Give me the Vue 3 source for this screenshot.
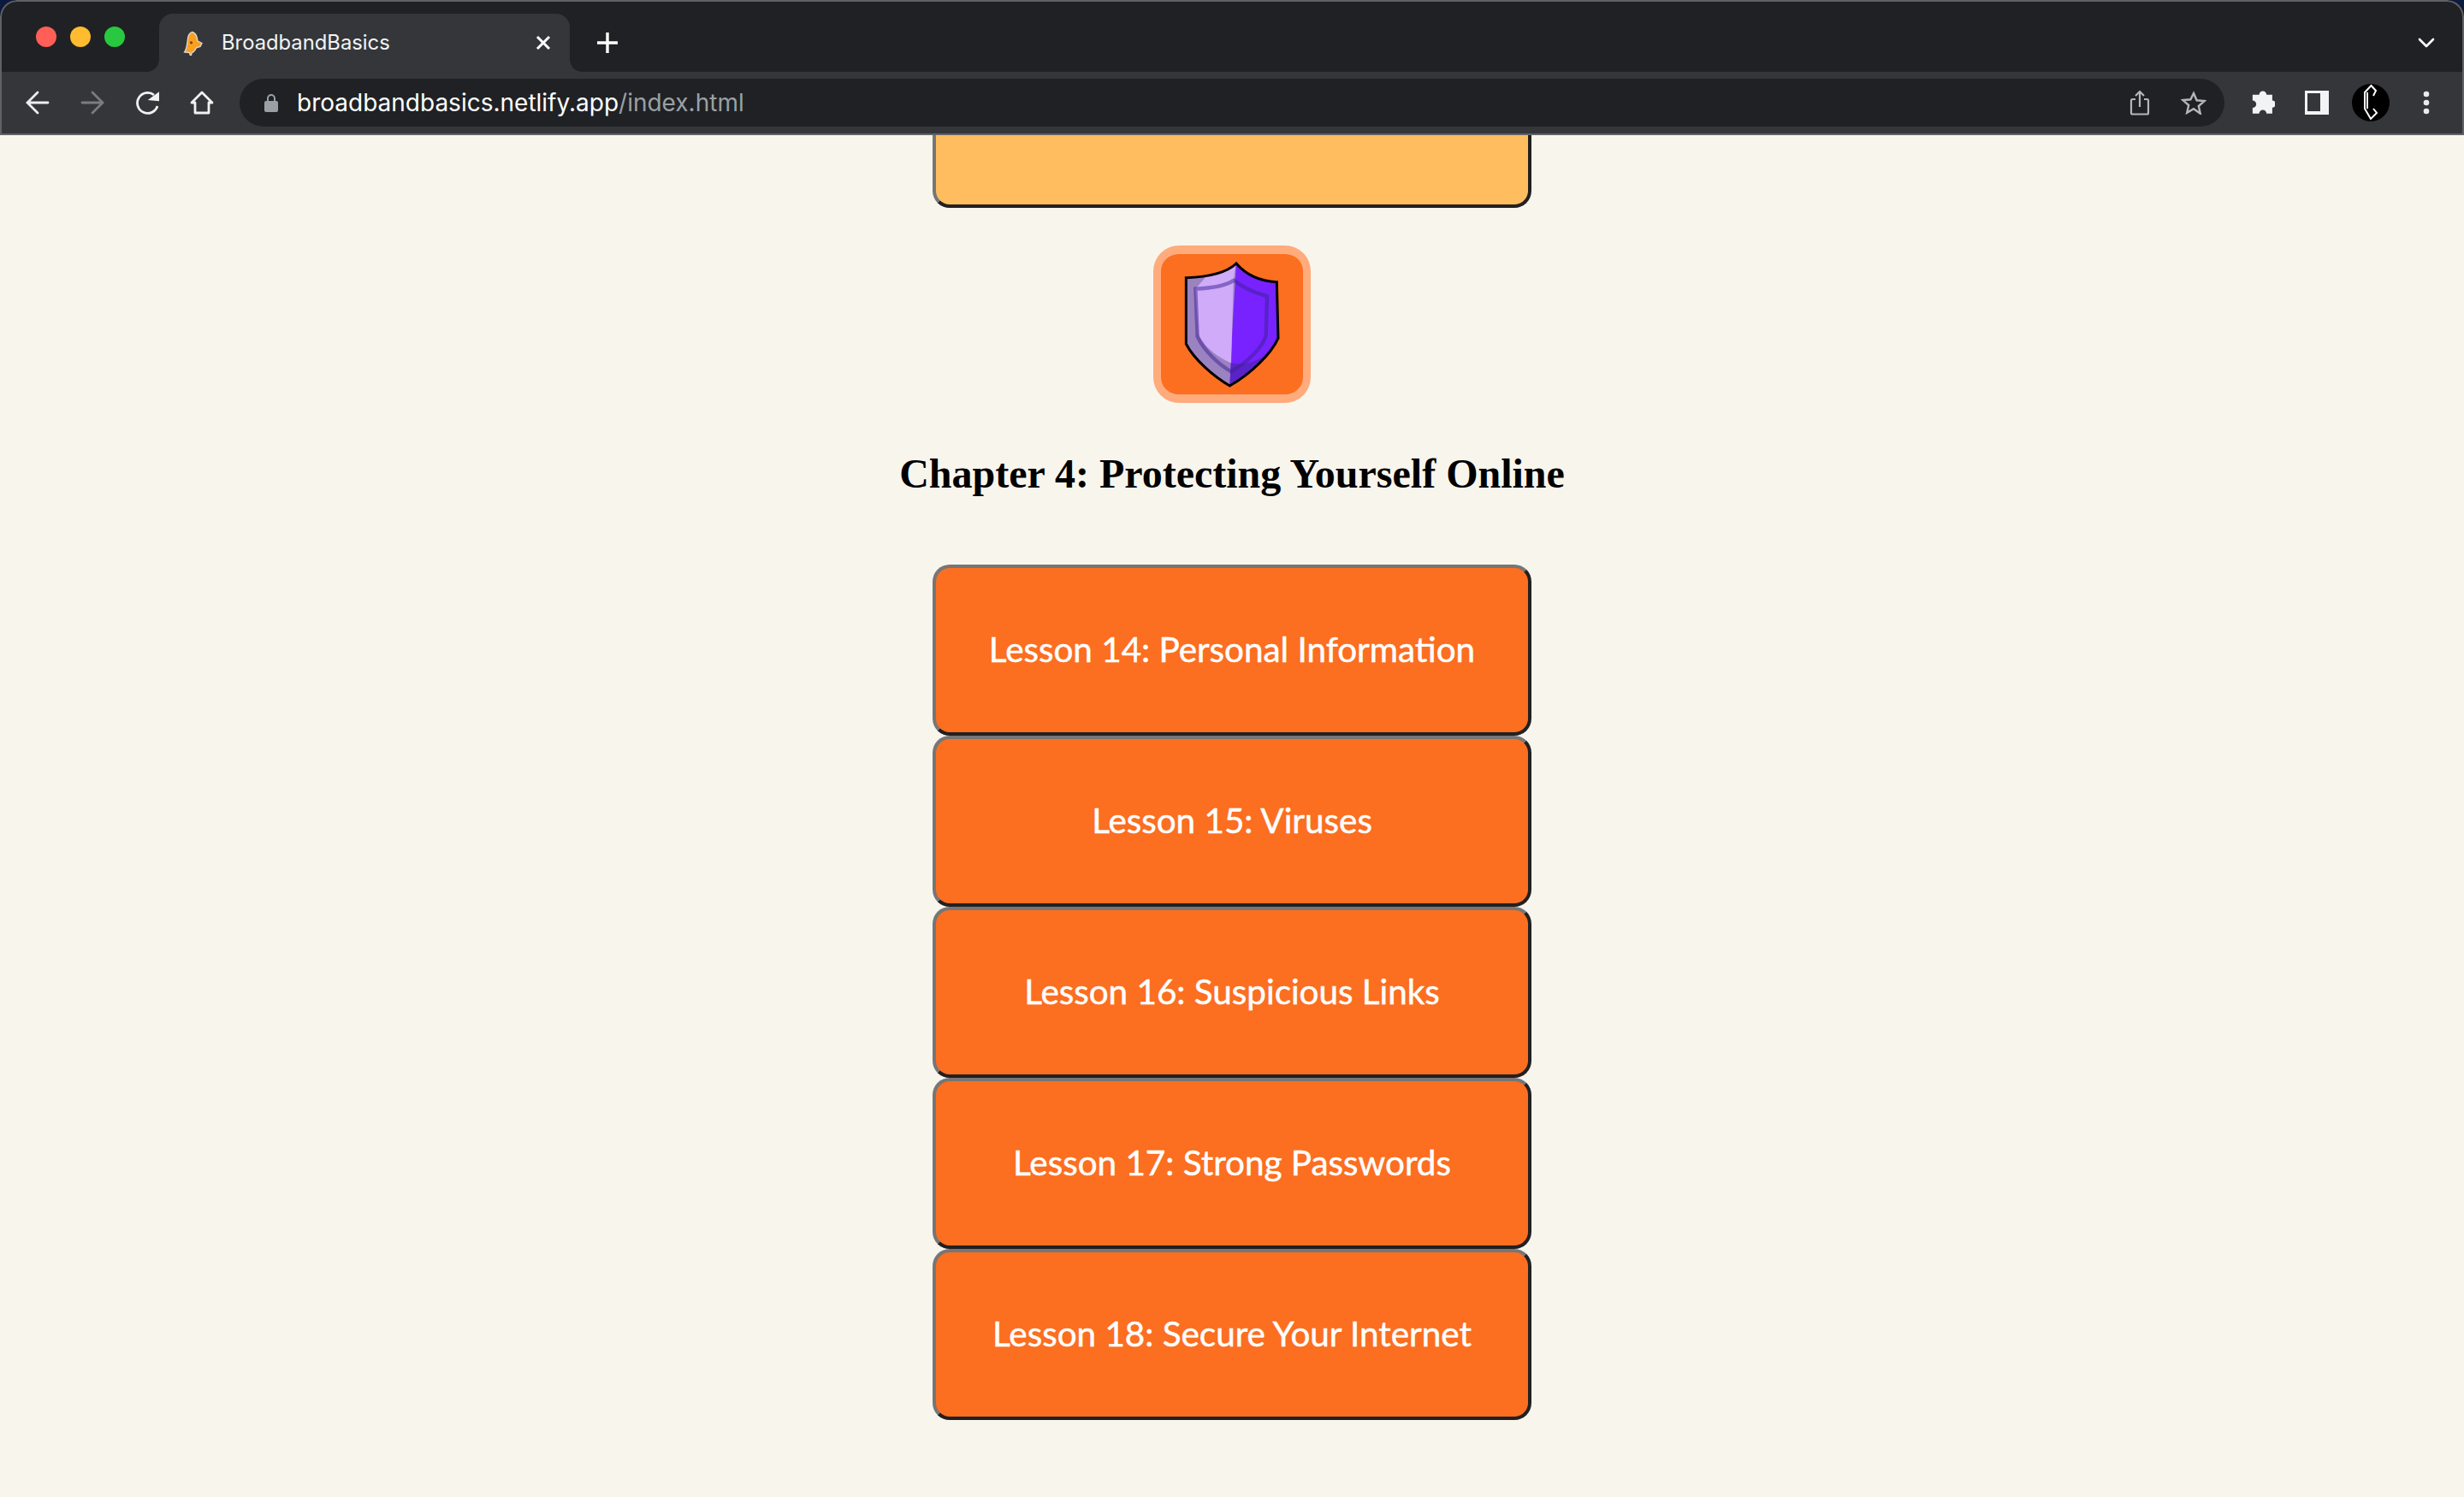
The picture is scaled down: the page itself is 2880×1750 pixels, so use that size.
<script setup>
const lessons = [
  'Lesson 14: Personal Information',
  'Lesson 15: Viruses',
  'Lesson 16: Suspicious Links',
  'Lesson 17: Strong Passwords',
  'Lesson 18: Secure Your Internet'
]
</script>

<template>
  <div class="window">
    <header class="chrome">
      <div class="tabstrip">
        <div class="lights">
          <span class="light red"></span>
          <span class="light amber"></span>
          <span class="light green"></span>
        </div>
        <div class="tab">
          <svg class="favicon" viewBox="636 102 76 92" width="25" height="31">
            <path d="M672 108C686 112 690 130 690 140L706 148L700 160L686 164C682 174 676 180 670 182L668 190L664 190L662 182L644 180C652 170 654 150 656 130C658 118 664 110 672 108Z" fill="#f9a020" stroke="#dcdad6" stroke-width="4"/>
            <circle cx="668" cy="146" r="5" fill="#80400f"/>
          </svg>
          <span class="tab-title">BroadbandBasics</span>
          <svg class="tab-close" viewBox="0 0 18 18" width="18" height="18">
            <path d="M2 2l14 14M16 2L2 16" stroke="#fff" stroke-width="3" fill="none"/>
          </svg>
        </div>
        <svg class="new-tab" viewBox="0 0 24 24" width="24" height="24">
          <path d="M12 0v24M0 12h24" stroke="#fff" stroke-width="3.400" fill="none"/>
        </svg>
        <svg class="tab-menu" viewBox="0 0 20 12" width="20" height="12">
          <path d="M2 2l8 8 8-8" stroke="#fff" stroke-width="2.600" fill="none" stroke-linecap="round" stroke-linejoin="round"/>
        </svg>
      </div>
      <div class="toolbar">
        <div class="nav">
          <svg viewBox="0 0 28 28" width="28" height="28">
            <path d="M26 14H3M14 2L2 14l12 12" stroke="#eceded" stroke-width="2.800" fill="none" stroke-linecap="round"/>
          </svg>
          <svg viewBox="0 0 28 28" width="28" height="28">
            <path d="M2 14h23M14 2l12 12-12 12" stroke="#7b7c7f" stroke-width="2.800" fill="none" stroke-linecap="round"/>
          </svg>
          <svg viewBox="0 0 28 28" width="28" height="28">
            <path d="M22 5A12 12 0 1 0 26 18" stroke="#f1f1f1" stroke-width="2.800" fill="none"/>
            <path d="M14.700 11L28 1.300V12.300z" fill="#f1f1f1"/>
          </svg>
          <svg viewBox="0 0 28 28" width="28" height="28">
            <path d="M2 14L14 2l12 12h-4v12H6V14z" stroke="#f1f1f1" stroke-width="2.800" fill="none" stroke-linejoin="round"/>
          </svg>
        </div>
        <div class="omnibox">
          <svg class="lock" viewBox="0 0 18 22" width="18" height="22">
            <path d="M5 9V6a4 4 0 0 1 8 0v3" stroke="#9aa0a6" stroke-width="2" fill="none"/>
            <rect x="1" y="9" width="16" height="13" rx="2" fill="#9aa0a6"/>
          </svg>
          <span class="url"><span class="host">broadbandbasics.netlify.app</span><span class="path">/index.html</span></span>
          <svg class="omni-icon" viewBox="0 0 24 30" width="24" height="30">
            <path d="M7 11H3.500a1.500 1.500 0 0 0-1.500 1.500V27a1.500 1.500 0 0 0 1.500 1.500h17A1.500 1.500 0 0 0 22 27V12.500A1.500 1.500 0 0 0 20.500 11H17M12 20V2M7 7l5-5 5 5" stroke="#b5b6b7" stroke-width="2.200" fill="none"/>
          </svg>
          <svg class="omni-icon star" viewBox="0 0 30 28" width="30" height="28">
            <path d="M15 3l3.600 8.300 9 .8-6.800 5.900 2 8.800L15 21.200 7.200 25.800l2-8.800-6.800-5.900 9-.8z" stroke="#b5b6b7" stroke-width="2.400" fill="none"/>
          </svg>
        </div>
        <div class="actions">
          <svg viewBox="0 0 30 30" width="30" height="30">
            <path d="M11 6a4.500 4.500 0 0 1 9 0h7v7a4.300 4.300 0 0 1 0 8.600V29h-7a4.500 4.500 0 0 0-9 0H3v-7a4.500 4.500 0 0 0 0-9V6z" fill="#f1f3f4" transform="translate(1 0) scale(.96)"/>
          </svg>
          <svg viewBox="0 0 28 28" width="28" height="28">
            <path fill-rule="evenodd" d="M0 0h28v28H0zM3 3v21h15V3z" fill="#f1f3f4"/>
          </svg>
          <svg class="avatar" viewBox="0 0 44 44" width="44" height="44">
            <circle cx="22" cy="22" r="22" fill="#000"/>
            <path d="M25 14L28 8L22.500 2L15 10V29L22 41L29 34L25 29" stroke="#fff" stroke-width="2" fill="none"/>
            <path d="M18 10V29" stroke="#fff" stroke-width="2" fill="none"/>
          </svg>
          <svg viewBox="0 0 8 28" width="8" height="28">
            <circle cx="4" cy="4" r="3.300" fill="#e8eaed"/>
            <circle cx="4" cy="14" r="3.300" fill="#e8eaed"/>
            <circle cx="4" cy="24" r="3.300" fill="#e8eaed"/>
          </svg>
        </div>
      </div>
    </header>

    <main class="page">
      <button class="lesson previous" type="button">Lesson 13: Cookies</button>

      <div class="badge">
        <svg viewBox="84 50 498 495" width="166" height="165">
          <path d="M348 83C320 110 260 130 172 133L172 365C200 420 270 480 325 512C400 470 470 400 495 345L490 148C430 145 380 120 348 83Z" fill="#7722ff"/>
          <path d="M348 83C320 110 260 130 172 133L172 365C200 420 270 480 325 512L335 300Z" fill="#9b82c0"/>
          <path d="M345 88C320 112 285 126 240 131L205 172L215 330C232 372 280 412 330 432L338 150Z" fill="#cfabfa"/>
          <path d="M330 432C370 442 425 430 462 392C432 440 372 486 325 510Z" fill="#5a23c8"/>
          <path d="M340 142C310 162 260 170 205 172L212 340C235 390 290 440 330 462C385 430 440 380 452 335L456 198C410 185 370 168 340 142Z" fill="none" stroke="#3c2090" stroke-opacity=".5" stroke-width="13"/>
          <path d="M348 83C320 110 260 130 172 133L172 365C200 420 270 480 325 512C400 470 470 400 495 345L490 148C430 145 380 120 348 83Z" fill="none" stroke="#000" stroke-width="9"/>
        </svg>
      </div>

      <h2 class="chapter-title">Chapter 4: Protecting Yourself Online</h2>

      <div class="lessons">
        <button v-for="lesson in lessons" :key="lesson" class="lesson" type="button">{{ lesson }}</button>
      </div>
    </main>
  </div>
</template>

<style scoped>
.window {
  width: 2880px;
  height: 1750px;
  display: flex;
  flex-direction: column;
  overflow: hidden;
  background: #0b1b3d;
}
.chrome {
  flex: none;
  border-radius: 20px 20px 0 0;
  overflow: hidden;
  position: relative;
}
.chrome::after {
  content: "";
  position: absolute;
  inset: 0 0 2px;
  border: 2px solid #606164;
  border-bottom: 0;
  border-radius: 20px 20px 0 0;
  pointer-events: none;
}
.tabstrip {
  height: 84px;
  background: #202124;
  display: flex;
  align-items: flex-end;
  position: relative;
}
.lights {
  width: 186px;
  padding: 0 0 29px 42px;
  box-sizing: border-box;
  display: flex;
  gap: 16px;
  align-self: flex-end;
}
.light {
  width: 24px;
  height: 24px;
  border-radius: 50%;
}
.red { background: #ff5f57; }
.amber { background: #febc2e; }
.green { background: #28c840; }
.tab {
  width: 480px;
  height: 68px;
  background: #35363a;
  border-radius: 16px 16px 0 0;
  display: flex;
  align-items: center;
  box-sizing: border-box;
  padding: 0 22px 0 27px;
  position: relative;
}
.tab::before,
.tab::after {
  content: "";
  position: absolute;
  bottom: 0;
  width: 14px;
  height: 14px;
}
.tab::before {
  left: -14px;
  background: radial-gradient(circle at 0 0, transparent 13.500px, #35363a 14px);
}
.tab::after {
  right: -14px;
  background: radial-gradient(circle at 100% 0, transparent 13.500px, #35363a 14px);
}
.favicon { flex: none; }
.tab-title {
  margin-left: 21px;
  flex: 1;
  font: 400 23.800px "Inter", sans-serif;
  color: #f1f3f4;
  position: relative;
  top: -1px;
}
.tab-close { flex: none; }
.new-tab { margin: 0 0 22px 32px; }
.tab-menu { position: absolute; right: 34px; top: 44px; }
.toolbar {
  height: 72px;
  background: #35363a;
  border-bottom: 2px solid #626366;
  display: flex;
  align-items: center;
}
.nav {
  width: 280px;
  box-sizing: border-box;
  padding-left: 30px;
  display: flex;
  gap: 36px;
}
.omnibox {
  width: 2320px;
  height: 56px;
  background: #202124;
  border-radius: 28px;
  display: flex;
  align-items: center;
  box-sizing: border-box;
  padding: 0 21px 0 28px;
}
.url {
  margin-left: 21px;
  flex: 1;
  font: 400 28px "Inter", sans-serif;
}
.host { color: #fff; }
.path { color: #9aa0a6; }
.star { margin-left: 36px; }
.actions {
  flex: 1;
  display: flex;
  align-items: center;
  padding-left: 29px;
  gap: 35px;
}
.avatar { margin: 0 4px 0 -8px; }
.page {
  flex: 1;
  display: flex;
  flex-direction: column;
  align-items: center;
  overflow: hidden;
  background: #f8f5ed;
}
.lesson {
  display: block;
  width: 700px;
  height: 200px;
  flex: none;
  background: #fc6e20;
  color: #fff;
  font: 400 40.400px "Lato", sans-serif;
  -webkit-text-stroke: 0.5px #fff;
  border-style: solid;
  border-width: 4px;
  border-color: #767676 #212121 #212121 #767676;
  border-radius: 20px;
  padding: 0 0 4px;
  text-align: center;
}
.previous {
  background: #ffbd5f;
  margin-top: -115px;
}
.badge {
  margin-top: 44px;
  flex: none;
  width: 166px;
  height: 164px;
  border: 9px solid #ffab7c;
  border-width: 10px 9px;
  border-radius: 30px;
  background: #fc6e20;
  display: flex;
  align-items: center;
  justify-content: center;
}
.chapter-title {
  margin: 55px 0 0;
  font: 700 48px/56px "Liberation Serif", serif;
  color: #000;
}
.lessons {
  margin-top: 78px;
}
</style>
